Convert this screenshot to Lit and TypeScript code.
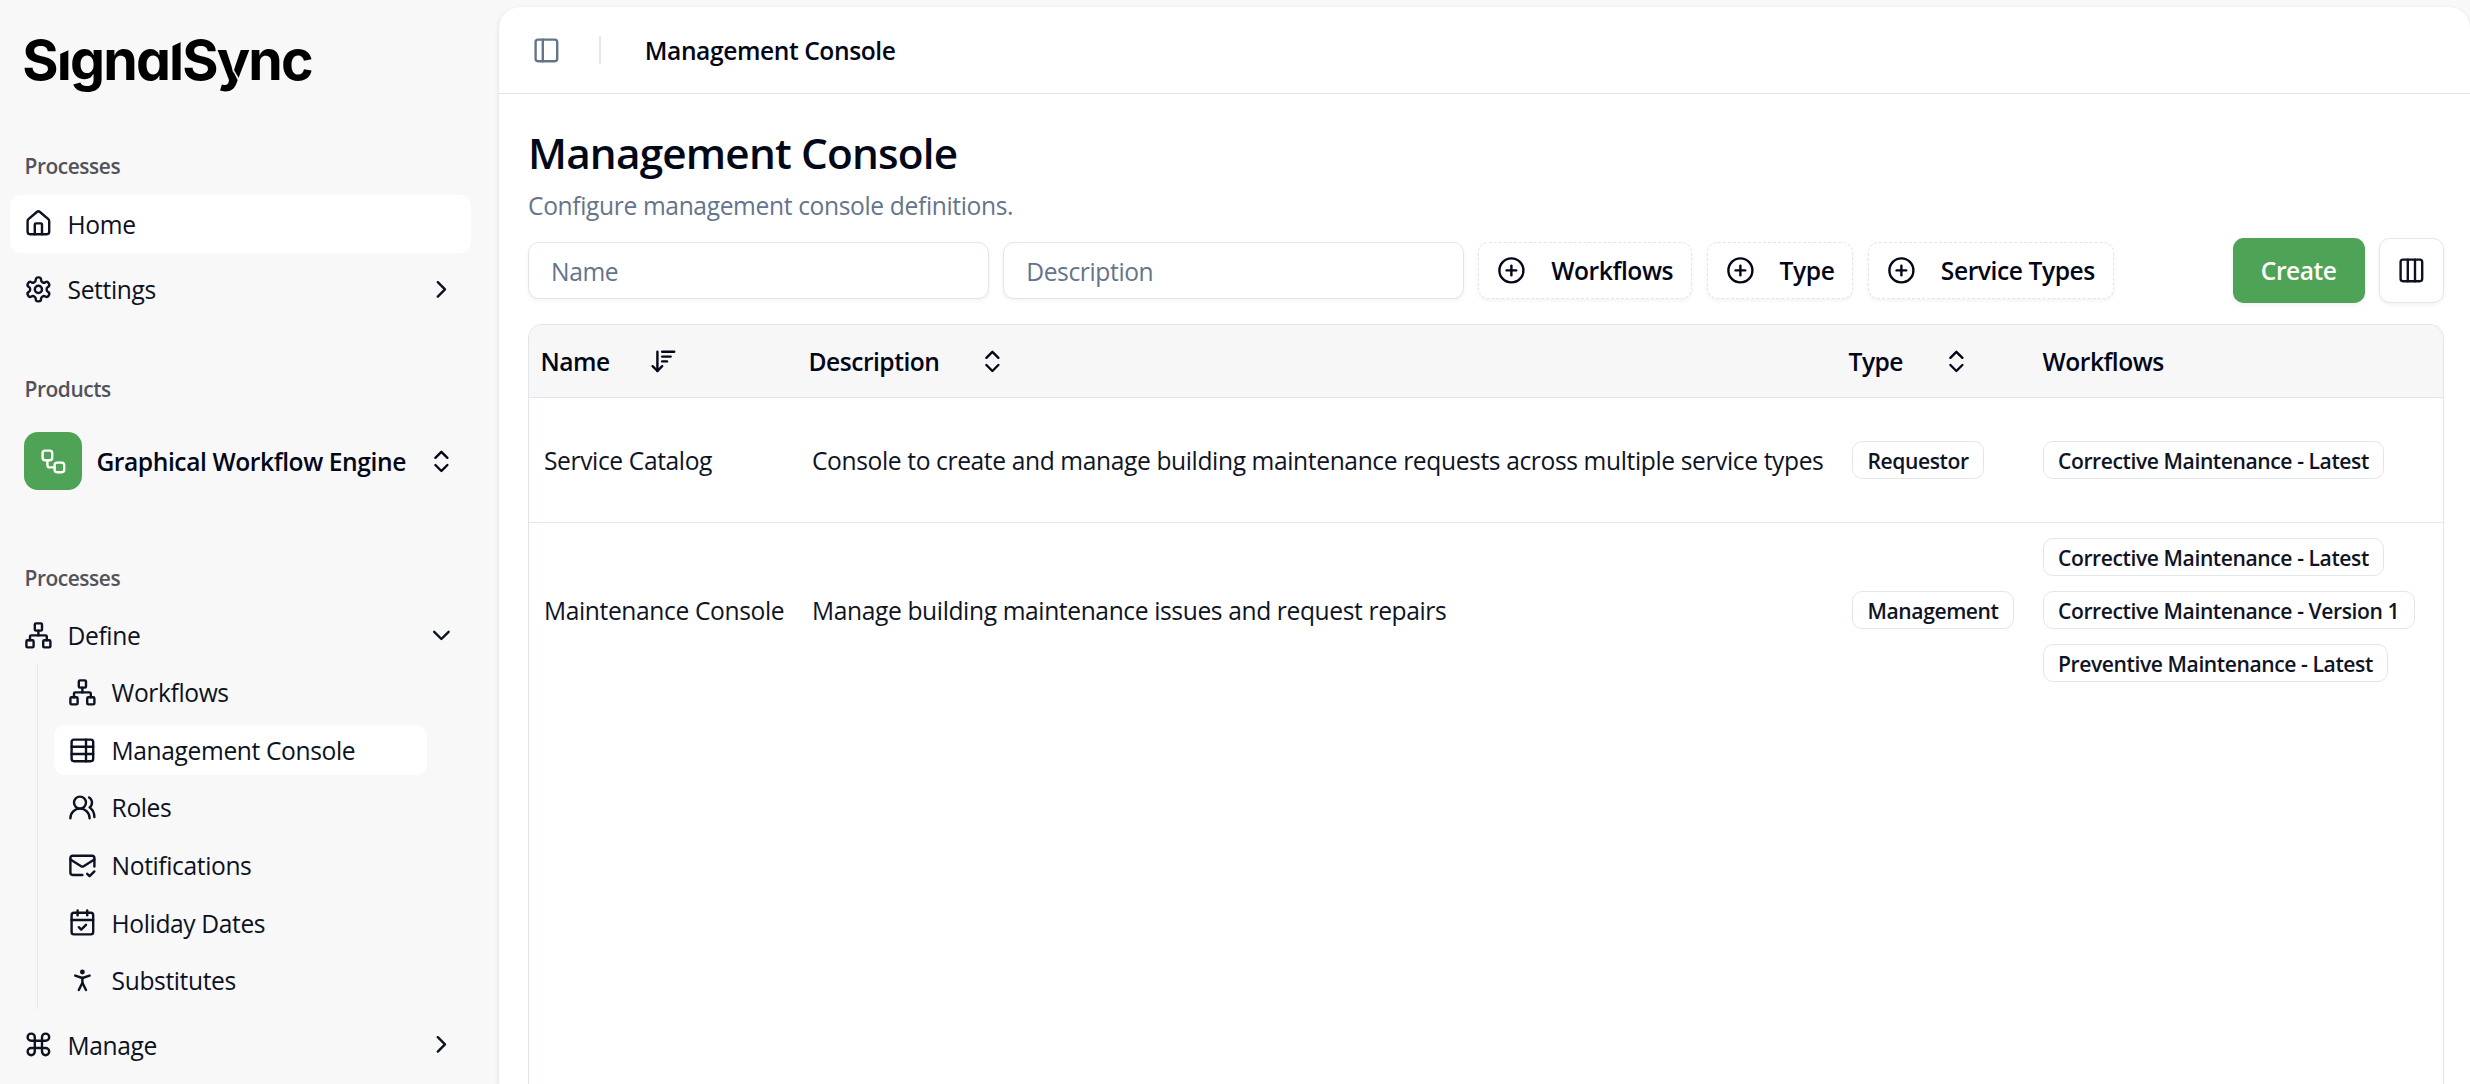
import { LitElement, html, svg, css, nothing } from 'lit';
import { customElement, property } from 'lit/decorators.js';
import { classMap } from 'lit/directives/class-map.js';

const ICONS = {
  home: svg`<path d="M15 21v-8a1 1 0 0 0-1-1h-4a1 1 0 0 0-1 1v8"/><path d="M3 10a2 2 0 0 1 .709-1.528l7-5.999a2 2 0 0 1 2.582 0l7 5.999A2 2 0 0 1 21 10v9a2 2 0 0 1-2 2H5a2 2 0 0 1-2-2z"/>`,
  settings: svg`<path d="M12.22 2h-.44a2 2 0 0 0-2 2v.18a2 2 0 0 1-1 1.73l-.43.25a2 2 0 0 1-2 0l-.15-.08a2 2 0 0 0-2.73.73l-.22.38a2 2 0 0 0 .73 2.73l.15.1a2 2 0 0 1 1 1.72v.51a2 2 0 0 1-1 1.74l-.15.09a2 2 0 0 0-.73 2.73l.22.38a2 2 0 0 0 2.73.73l.15-.08a2 2 0 0 1 2 0l.43.25a2 2 0 0 1 1 1.73V20a2 2 0 0 0 2 2h.44a2 2 0 0 0 2-2v-.18a2 2 0 0 1 1-1.73l.43-.25a2 2 0 0 1 2 0l.15.08a2 2 0 0 0 2.73-.73l.22-.39a2 2 0 0 0-.73-2.73l-.15-.08a2 2 0 0 1-1-1.74v-.5a2 2 0 0 1 1-1.74l.15-.09a2 2 0 0 0 .73-2.73l-.22-.38a2 2 0 0 0-2.73-.73l-.15.08a2 2 0 0 1-2 0l-.43-.25a2 2 0 0 1-1-1.73V4a2 2 0 0 0-2-2z"/><circle cx="12" cy="12" r="3"/>`,
  flow: svg`<rect width="8" height="8" x="3" y="3" rx="2"/><path d="M7 11v4a2 2 0 0 0 2 2h4"/><rect width="8" height="8" x="13" y="13" rx="2"/>`,
  network: svg`<rect x="16" y="16" width="6" height="6" rx="1"/><rect x="2" y="16" width="6" height="6" rx="1"/><rect x="9" y="2" width="6" height="6" rx="1"/><path d="M5 16v-3a1 1 0 0 1 1-1h12a1 1 0 0 1 1 1v3"/><path d="M12 12V8"/>`,
  table: svg`<path d="M15 3v18"/><rect width="18" height="18" x="3" y="3" rx="2"/><path d="M21 9H3"/><path d="M21 15H3"/>`,
  users: svg`<path d="M18 21a8 8 0 0 0-16 0"/><circle cx="10" cy="8" r="5"/><path d="M22 20c0-3.37-2-6.5-4-8a5 5 0 0 0-.45-8.3"/>`,
  mail: svg`<path d="M22 13V6a2 2 0 0 0-2-2H4a2 2 0 0 0-2 2v12c0 1.1.9 2 2 2h8"/><path d="m22 7-8.97 5.7a1.94 1.94 0 0 1-2.06 0L2 7"/><path d="m16 19 2 2 4-4"/>`,
  calendar: svg`<path d="M8 2v4"/><path d="M16 2v4"/><rect width="18" height="18" x="3" y="4" rx="2"/><path d="M3 10h18"/><path d="m9 16 2 2 4-4"/>`,
  person: svg`<circle cx="12" cy="5" r="1"/><path d="m9 20 3-6 3 6"/><path d="m6 8 6 2 6-2"/><path d="M12 10v4"/>`,
  command: svg`<path d="M15 6v12a3 3 0 1 0 3-3H6a3 3 0 1 0 3 3V6a3 3 0 1 0-3 3h12a3 3 0 1 0-3-3"/>`,
  right: svg`<path d="m9 18 6-6-6-6"/>`,
  down: svg`<path d="m6 9 6 6 6-6"/>`,
  updown: svg`<path d="m7 15 5 5 5-5"/><path d="m7 9 5-5 5 5"/>`,
  sort: svg`<path d="m3 16 4 4 4-4"/><path d="M7 20V4"/><path d="M11 4h10"/><path d="M11 8h7"/><path d="M11 12h4"/>`,
  plus: svg`<circle cx="12" cy="12" r="10"/><path d="M8 12h8"/><path d="M12 8v8"/>`,
  columns: svg`<rect width="18" height="18" x="3" y="3" rx="2"/><path d="M9 3v18"/><path d="M15 3v18"/>`,
  panel: svg`<rect width="18" height="18" x="3" y="3" rx="2"/><path d="M9 3v18"/>`,
};
type IconName = keyof typeof ICONS;

@customElement('ui-icon')
class UiIcon extends LitElement {
  @property() name: IconName = 'home';
  static styles = css`
    :host { display: block; flex: none; width: 28.8px; height: 28.8px; }
    .glyph { display: block; width: 100%; height: 100%; fill: none; stroke: currentColor; stroke-width: 2; stroke-linecap: round; stroke-linejoin: round; }
  `;
  render() {
    return html`<svg class="glyph" viewBox="0 0 24 24">${ICONS[this.name]}</svg>`;
  }
}

@customElement('app-sidebar')
class AppSidebar extends LitElement {
  static styles = css`
    * { box-sizing: border-box; }
    :host { display: block; color: #0c1222; }
    .nav { display: flex; flex-direction: column; padding: 0 28px 0 10px; }
    .logo { position: relative; height: 138px; padding: 26px 0 0 12.3px; color: #000; font: 700 55.5px/67px Inter, sans-serif; font-feature-settings: "cv11"; letter-spacing: -1.85px; white-space: nowrap; }
    .cuts { position: absolute; left: 0; top: 0; fill: #f8f8f8; }
    .label { height: 57px; padding: 1px 0 0 14.6px; display: flex; align-items: center; font-size: 20.9px; font-weight: 540; letter-spacing: -0.45px; color: #52525b; }
    .items { display: flex; flex-direction: column; gap: 7.6px; }
    .row { height: 57.6px; display: flex; align-items: center; gap: 14.4px; padding: 0 15px 0 14.4px; border-radius: 11px; white-space: nowrap; }
    .row.active { background: #fff; }
    .grow { flex: 1; padding-top: 2px; }
    .top { margin-bottom: 43.2px; }
    .product { height: 86.4px; display: flex; align-items: center; padding: 0 15px 0 14.2px; gap: 14.4px; margin-bottom: 44.8px; font-weight: 560; letter-spacing: -0.42px; white-space: nowrap; color: #020617; }
    .tile { width: 57.8px; height: 57.8px; border-radius: 14px; background: #4fa356; color: #fff; display: grid; place-items: center; }
    .sub { margin: 0 44px 0 27px; padding: 3.6px 0 3.6px 16px; border-left: 1px solid #e5e7eb; display: flex; flex-direction: column; gap: 7.2px; }
    .sub .row { height: 50.4px; }
    .manage { margin-top: 6.8px; }
  `;
  private row(icon: IconName, text: string, active = false, tail?: IconName) {
    return html`<div class=${classMap({ row: true, active })}>
      <ui-icon name=${icon}></ui-icon><span class="grow">${text}</span>
      ${tail ? html`<ui-icon name=${tail}></ui-icon>` : nothing}
    </div>`;
  }
  render() {
    return html`<nav class="nav">
      <div class="logo">SıgnalSync<svg class="cuts" width="320" height="110">
        <polygon points="49,47 60,47 60,49.6 49,54.6"/>
        <polygon points="161.5,37 172,37 172,41.4 161.5,46.6"/>
        <polygon points="222.6,70 224,70 231,82 229.2,83"/>
      </svg></div>
      <div class="label">Processes</div>
      <div class="items top">${this.row('home', 'Home', true)}${this.row('settings', 'Settings', false, 'right')}</div>
      <div class="label">Products</div>
      <div class="product">
        <div class="tile"><ui-icon name="flow"></ui-icon></div>
        <span class="grow">Graphical Workflow Engine</span>
        <ui-icon name="updown"></ui-icon>
      </div>
      <div class="label">Processes</div>
      ${this.row('network', 'Define', false, 'down')}
      <div class="sub">
        ${this.row('network', 'Workflows')}
        ${this.row('table', 'Management Console', true)}
        ${this.row('users', 'Roles')}
        ${this.row('mail', 'Notifications')}
        ${this.row('calendar', 'Holiday Dates')}
        ${this.row('person', 'Substitutes')}
      </div>
      <div class="manage">${this.row('command', 'Manage', false, 'right')}</div>
    </nav>`;
  }
}

interface Definition { name: string; description: string; type: string; workflows: string[]; }

const DEFINITIONS: Definition[] = [
  { name: 'Service Catalog', description: 'Console to create and manage building maintenance requests across multiple service types', type: 'Requestor', workflows: ['Corrective Maintenance - Latest'] },
  { name: 'Maintenance Console', description: 'Manage building maintenance issues and request repairs', type: 'Management', workflows: ['Corrective Maintenance - Latest', 'Corrective Maintenance - Version 1', 'Preventive Maintenance - Latest'] },
];

@customElement('definition-table')
class DefinitionTable extends LitElement {
  static styles = css`
    * { box-sizing: border-box; }
    :host { display: flex; flex-direction: column; border: 1px solid #e3e5ec; border-bottom: 0; border-radius: 14.4px 14.4px 0 0; overflow: hidden; color: #0f1424; }
    .line { display: grid; grid-template-columns: 268px 1040px 190.5px 1fr; align-items: center; white-space: nowrap; }
    .head { height: 73px; background: #f7f7f8; border-bottom: 1px solid #e3e5ec; font-weight: 550; letter-spacing: -0.5px; color: #020617; }
    .th { display: flex; align-items: center; gap: 39px; padding: 1.5px 0 0 11.5px; }
    .th.last { padding-left: 15px; }
    .body { height: 125px; border-bottom: 1px solid #e3e5ec; }
    .body.tall { height: 174px; border-bottom: 0; }
    .td { padding-left: 15px; display: flex; flex-direction: column; align-items: flex-start; gap: 14.6px; }
    .td.text { padding-top: 2px; }
    .badge { height: 38.2px; padding: 1.5px 14.5px 0; display: flex; align-items: center; border: 1px solid #e3e5ec; border-radius: 10px; font-size: 21.1px; font-weight: 560; letter-spacing: -0.42px; background: #fff; }
  `;
  render() {
    return html`
      <div class="line head">
        <div class="th">Name<ui-icon name="sort"></ui-icon></div>
        <div class="th">Description<ui-icon name="updown"></ui-icon></div>
        <div class="th">Type<ui-icon name="updown"></ui-icon></div>
        <div class="th last">Workflows</div>
      </div>
      ${DEFINITIONS.map((d) => html`<div class=${classMap({ line: true, body: true, tall: d.workflows.length > 1 })}>
        <div class="td text">${d.name}</div>
        <div class="td text">${d.description}</div>
        <div class="td"><span class="badge">${d.type}</span></div>
        <div class="td">${d.workflows.map((w) => html`<span class="badge">${w}</span>`)}</div>
      </div>`)}`;
  }
}

@customElement('app-root')
class AppRoot extends LitElement {
  static styles = css`
    * { box-sizing: border-box; }
    :host { display: flex; width: 100%; height: 1084px; overflow: hidden; background: #f8f8f8; font: 400 24.6px/1.4 "Open Sans", "Noto Sans", sans-serif; letter-spacing: -0.38px; color: #0c1222; }
    .side { width: 499px; flex: none; }
    .main { flex: 1; min-width: 0; margin-top: 7px; background: #fff; border-radius: 21.6px 21.6px 0 0; box-shadow: 0 2px 5px rgba(0, 0, 0, 0.12); display: flex; flex-direction: column; }
    .bar { height: 87px; flex: none; border-bottom: 1px solid #e4e4e7; display: flex; align-items: center; padding-left: 33px; }
    .toggle { color: #64748b; }
    .sep { width: 2px; height: 28.8px; background: #e2e8f0; margin: 0 44px 0 38px; }
    .crumb { padding-top: 2px; font-weight: 560; letter-spacing: -0.42px; color: #020617; }
    .content { flex: 1; display: flex; flex-direction: column; padding: 31.5px 26px 0 29px; }
    .title { margin: 0 0 8.5px; font-size: 42.3px; line-height: 54px; font-weight: 580; letter-spacing: -0.82px; color: #020817; }
    .lead { margin: 0 0 14px; line-height: 36px; letter-spacing: -0.36px; color: #64748b; }
    .filters { height: 64.8px; display: flex; align-items: center; gap: 14.6px; margin-bottom: 21.2px; }
    .field, .chip, .square { border: 1px solid #e3e5ec; border-radius: 10.8px; background: #fff; box-shadow: 0 2px 4px rgba(0, 0, 0, 0.05); display: flex; align-items: center; white-space: nowrap; height: 57.8px; }
    .field { width: 460.6px; padding: 3px 0 0 22px; color: #64748b; }
    .chip { border-style: dashed; padding: 0 18px 0 18px; gap: 25px; font-weight: 550; letter-spacing: -0.42px; color: #020617; }
    .chip-text { padding-top: 1.5px; }
    .create { margin-left: auto; width: 132px; height: 64.8px; padding-top: 2px; border-radius: 10.8px; background: #4fa356; color: #fff; display: grid; place-items: center; font-weight: 560; letter-spacing: -0.5px; box-shadow: 0 2px 4px rgba(0, 0, 0, 0.06); }
    .square { width: 64.8px; height: 64.8px; justify-content: center; }
    .table { flex: 1; }
  `;
  render() {
    return html`
      <app-sidebar class="side"></app-sidebar>
      <main class="main">
        <header class="bar">
          <ui-icon class="toggle" name="panel"></ui-icon>
          <div class="sep"></div>
          <div class="crumb">Management Console</div>
        </header>
        <section class="content">
          <h1 class="title">Management Console</h1>
          <p class="lead">Configure management console definitions.</p>
          <div class="filters">
            <div class="field">Name</div>
            <div class="field">Description</div>
            ${['Workflows', 'Type', 'Service Types'].map((t) => html`<div class="chip"><ui-icon name="plus"></ui-icon><span class="chip-text">${t}</span></div>`)}
            <div class="create">Create</div>
            <div class="square"><ui-icon name="columns"></ui-icon></div>
          </div>
          <definition-table class="table"></definition-table>
        </section>
      </main>`;
  }
}
